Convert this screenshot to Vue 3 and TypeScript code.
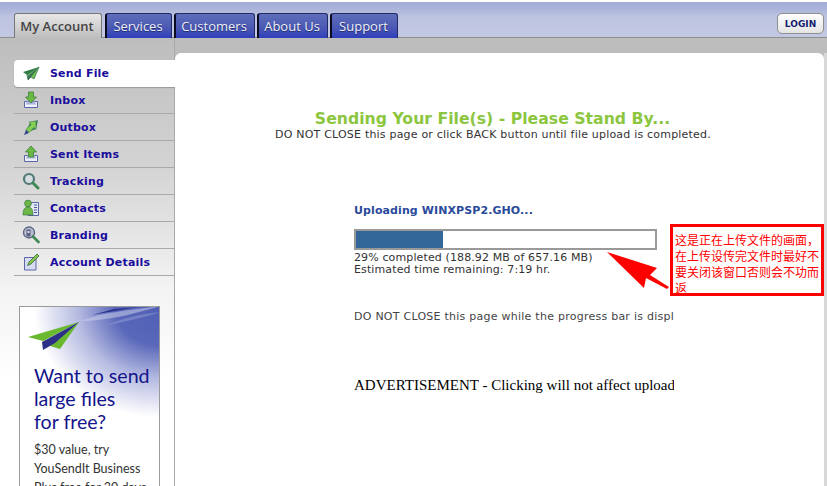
<template>
  <div class="page">
    <header class="top">
      <nav class="tabs">
        <a v-for="(t, i) in tabs" :key="t" class="tab" :class="{ active: i === 0 }">{{ t }}</a>
      </nav>
      <button class="login">LOGIN</button>
    </header>

    <div class="body">
      <aside class="side">
        <ul class="menu">
          <li v-for="(m, i) in menu" :key="m.label" class="item" :class="{ current: i === 0 }">
            <svg class="ico" viewBox="0 0 18 18" width="18" height="18">
              <template v-if="m.icon === 'send'">
                <path d="M17 2 1 7l4 3z" fill="#2f7f45" />
                <path d="M17 2 5 10l1 5 3-3 3 2z" fill="#6fc24a" stroke="#2f6f4f" stroke-width=".7" />
                <path d="M17 2 6 11l0 4 3-3z" fill="#3a6f5a" />
              </template>
              <template v-else-if="m.icon === 'inbox'">
                <path d="M2.500 10.500h13v6h-13z" fill="#eef0fa" stroke="#5a66a8" />
                <path d="M5 10.500h8l1 3H4z" fill="#aab2dc" />
                <path d="M6.500 1h5v5h3l-5.500 6-5.500-6h3z" fill="#69b944" stroke="#3f7f3a" stroke-width=".8" />
              </template>
              <template v-else-if="m.icon === 'outbox'">
                <path d="M3 15 8 5l8-3-2 9z" fill="#2f7a55" />
                <path d="M14 3 7 4l2 2.500-5 5 3 3 5-5 2 2z" fill="#85d050" stroke="#3d7a48" stroke-width=".6" />
                <path d="M4 12l3 3-5 2z" fill="#37458f" />
              </template>
              <template v-else-if="m.icon === 'sent'">
                <path d="M2.500 10.500h13v6h-13z" fill="#eef0fa" stroke="#5a66a8" />
                <path d="M5 10.500h8l1 3H4z" fill="#aab2dc" />
                <path d="M9 1l5.500 6h-3v5h-5V7h-3z" fill="#69b944" stroke="#3f7f3a" stroke-width=".8" />
              </template>
              <template v-else-if="m.icon === 'track'">
                <circle cx="7" cy="7" r="5" fill="#d5dde0" stroke="#4f7a78" stroke-width="2.200" />
                <path d="M11 11l5 5" stroke="#3f8a55" stroke-width="3" stroke-linecap="round" />
              </template>
              <template v-else-if="m.icon === 'contacts'">
                <path d="M9.500 3.500h7v13H6v-8z" fill="#e4e7f6" stroke="#4a58a0" stroke-width=".9" />
                <path d="M12 6h3M12 8.500h3M12 11h3M12 13.500h3" stroke="#4a58a0" />
                <circle cx="6" cy="4.500" r="3.400" fill="#6fb648" stroke="#356b40" stroke-width=".6" />
                <path d="M1 16c0-6 2-8 5-8s5 2 5 8z" fill="#6fb648" stroke="#356b40" stroke-width=".6" />
              </template>
              <template v-else-if="m.icon === 'brand'">
                <circle cx="7" cy="6.500" r="5.500" fill="#b8bdd0" stroke="#5a627f" stroke-width="1.300" />
                <path d="M4.500 3.500h4v7h-4z" fill="#5a627f" />
                <path d="M5.500 5h2v2h-2z" fill="#dfe3f5" />
                <path d="M11 10.500l5.500 5.500" stroke="#3f8a55" stroke-width="2.600" stroke-linecap="round" />
              </template>
              <template v-else>
                <path d="M2.500 4.500h11.500v12.500H2.500z" fill="#d8dcf2" stroke="#5a66a8" />
                <path d="M15 1l2 2-8 8-3.500 1.500L7 9z" fill="#85c54e" stroke="#356b40" stroke-width=".8" />
              </template>
            </svg>
            <span>{{ m.label }}</span>
          </li>
        </ul>

        <div class="promo">
          <svg class="plane" viewBox="0 0 141 60" width="141" height="60">
            <path d="M60 14C85 5 110 3 141 -1 110 8 85 14 60 14z" fill="#c8cdea" opacity=".55" />
            <path d="M84 19C105 10 122 7 141 5 122 11 103 15 84 19z" fill="#8a94d0" opacity=".6" />
            <path d="M72 8 94 2 118 0z" fill="#2c348c" />
            <path d="M59 15 8 30 23 34z" fill="#6ab82d" />
            <path d="M59 15 30 39 40 42z" fill="#6ab82d" />
            <path d="M59 15 22 35 23 43 35 36z" fill="#2d2f86" />
          </svg>
          <h2>Want to send<br />large files<br />for free?</h2>
          <p>$30 value, try<br />YouSendIt Business<br />Plus free for 30 days</p>
        </div>
      </aside>

      <main class="main">
        <h1>Sending Your File(s) - Please Stand By...</h1>
        <p class="warn">DO NOT CLOSE this page or click BACK button until file upload is completed.</p>

        <section class="upload">
          <h3>Uploading WINXPSP2.GHO...</h3>
          <div class="bar"><div class="fill" :style="{ width: pct + '%' }"></div></div>
          <p class="stat">29% completed (188.92 MB of 657.16 MB)<br />Estimated time remaining: 7:19 hr.</p>
          <p class="clip">DO NOT CLOSE this page while the progress bar is displ</p>
          <p class="ad">ADVERTISEMENT - Clicking will not affect upload</p>
        </section>
      </main>
      <div class="edge"></div>
    </div>

    <svg class="arrow" viewBox="0 0 70 46" width="70" height="46">
      <path d="M1 1 51 17 44 24 63 36 61 38 40 27 38 37z" fill="#f00" />
    </svg>
    <div class="note">这是正在上传文件的画面，在上传设传完文件时最好不要关闭该窗口否则会不功而返</div>
  </div>
</template>

<script setup lang="ts">
const pct = 29

const tabs: string[] = ['My Account', 'Services', 'Customers', 'About Us', 'Support']

const menu: { label: string; icon: string }[] = [
  { label: 'Send File', icon: 'send' },
  { label: 'Inbox', icon: 'inbox' },
  { label: 'Outbox', icon: 'outbox' },
  { label: 'Sent Items', icon: 'sent' },
  { label: 'Tracking', icon: 'track' },
  { label: 'Contacts', icon: 'contacts' },
  { label: 'Branding', icon: 'brand' },
  { label: 'Account Details', icon: 'details' }
]
</script>

<style>
html,
body {
  margin: 0;
  background: #fff;
}
</style>

<style scoped>
.page {
  position: relative;
  width: 827px;
  height: 486px;
  overflow: hidden;
  padding-top: 2px;
  box-sizing: border-box;
  font-family: "DejaVu Sans", Verdana, sans-serif;
  background: #fff;
}
.top {
  height: 36px;
  box-sizing: border-box;
  display: flex;
  justify-content: space-between;
  align-items: flex-end;
  padding: 0 3px 0 14px;
  background: linear-gradient(#a3add6 0, #a9b2d9 6px, #bcc3e0 14px, #c3c9e3 100%);
  border-bottom: 1px solid #8f8f8f;
}
.tabs {
  display: flex;
  gap: 2px;
  margin-bottom: -1px;
}
.tab {
  height: 25px;
  box-sizing: border-box;
  padding: 3px 2px 0 0;
  text-align: center;
  font-family: "Open Sans", sans-serif;
  font-size: 13px;
  line-height: 18px;
  color: #eef0fa;
  background: linear-gradient(#5f6dbb, #4a58b4 60%, #2f3fbc);
  border: 1px solid #1f2a66;
  border-left: 2px solid #0a0a20;
  border-bottom: 0;
  border-radius: 3px 3px 0 0;
  text-shadow: 0 1px 1px #1f2a66;
}
.tab:nth-child(1) { width: 88px; margin-right: 1px; }
.tab:nth-child(2) { width: 67px; }
.tab:nth-child(3) { width: 81px; }
.tab:nth-child(4) { width: 71px; }
.tab:nth-child(5) { width: 68px; }
.tab.active {
  color: #444;
  font-weight: 600;
  background: linear-gradient(#e8e8e8, #bdbdbd);
  border: 1px solid #777;
  border-bottom: 0;
  text-shadow: none;
}
.login {
  width: 47px;
  height: 21px;
  margin-bottom: 3px;
  padding: 0;
  font-family: "DejaVu Sans", sans-serif;
  font-weight: 700;
  font-size: 9px;
  color: #14206e;
  background: linear-gradient(#fff, #e4e4e4);
  border: 1px solid #8f8f8f;
  border-radius: 5px;
}
.body {
  height: 448px;
  display: grid;
  grid-template-columns: 175px 1fr 3px;
  background: #bdbdbd;
}
.side {
  padding-top: 22px;
  background: linear-gradient(#bdbdbd 0, #d4d4d4 130px, #f3f3f3 250px, #fff 340px);
  border-right: 1px solid #a8a8a8;
  box-sizing: border-box;
}
.menu {
  list-style: none;
  margin: 0 -1px 0 14px;
  padding: 0;
}
.item {
  height: 27px;
  box-sizing: border-box;
  display: flex;
  align-items: center;
  gap: 10px;
  padding-left: 8px;
  border-bottom: 1px solid #a9a9a9;
  font-size: 11px;
  font-weight: 700;
  letter-spacing: 0.2px;
  color: #1a0d9c;
}
.item.current {
  background: #fff;
  border-bottom: 0;
  border-radius: 4px 0 0 4px;
  box-shadow: 0 1px 1px #999;
}
.ico {
  flex: none;
}
.promo {
  position: relative;
  width: 141px;
  height: 190px;
  margin: 30px 0 0 19px;
  box-sizing: border-box;
  padding: 57px 0 0 14px;
  white-space: nowrap;
  border: 1px solid #9a9a9a;
  border-bottom: 0;
  background:
    radial-gradient(ellipse 125px 110px at 100% 0, #4f5eb5 0, #5a68ba 35%, rgba(120, 130, 200, 0.55) 65%, rgba(255, 255, 255, 0) 100%),
    #fff;
}
.plane {
  position: absolute;
  left: 0;
  top: 0;
}
.promo h2 {
  margin: 0 0 7px;
  font-family: Lato, sans-serif;
  font-weight: 400;
  font-size: 19.600px;
  line-height: 23px;
  color: #14148c;
}
.promo p {
  margin: 0;
  font-family: Lato, sans-serif;
  font-size: 12.500px;
  line-height: 19px;
  color: #333;
}
.main {
  margin-top: 15px;
  background: #fff;
  border-radius: 6px 6px 0 0;
  padding-top: 56px;
  min-width: 0;
}
.main h1 {
  width: 635px;
  margin: 0;
  text-align: center;
  font-size: 15.700px;
  line-height: 19px;
  font-weight: 700;
  color: #8cc63f;
}
.warn {
  width: 636px;
  margin: 0;
  text-align: center;
  font-size: 11px;
  letter-spacing: 0.2px;
  line-height: 13px;
  color: #333;
}
.upload {
  width: 320px;
  margin: 63px 0 0 179px;
  overflow: hidden;
  white-space: nowrap;
}
.upload h3 {
  margin: 0 0 11px;
  font-size: 11px;
  letter-spacing: 0.1px;
  line-height: 14px;
  font-weight: 700;
  color: #2a4a9a;
}
.bar {
  width: 303px;
  height: 21px;
  box-sizing: border-box;
  border: 2px solid #999;
  background: #fff;
}
.fill {
  height: 100%;
  background: #336699;
}
.stat {
  margin: 2px 0 0;
  font-size: 11px;
  letter-spacing: 0.12px;
  line-height: 12px;
  color: #333;
}
.clip {
  margin: 34px 0 0;
  font-size: 11px;
  letter-spacing: 0.25px;
  line-height: 14px;
  color: #444;
}
.ad {
  margin: 51px 0 0;
  font-family: "Liberation Serif", serif;
  font-size: 15px;
  line-height: 20px;
  color: #000;
}
.edge {
  background: #d8d8d8;
  margin-top: 15px;
}
.note {
  position: absolute;
  left: 670px;
  top: 224px;
  width: 154px;
  height: 72px;
  box-sizing: border-box;
  padding: 6px 0 0 2px;
  border: 3px solid #f00;
  background: #fff;
  color: #f00;
  font-family: "Liberation Sans", "Noto Sans CJK SC", sans-serif;
  font-size: 12px;
  line-height: 16px;
}
.arrow {
  position: absolute;
  left: 606px;
  top: 251px;
}
</style>
